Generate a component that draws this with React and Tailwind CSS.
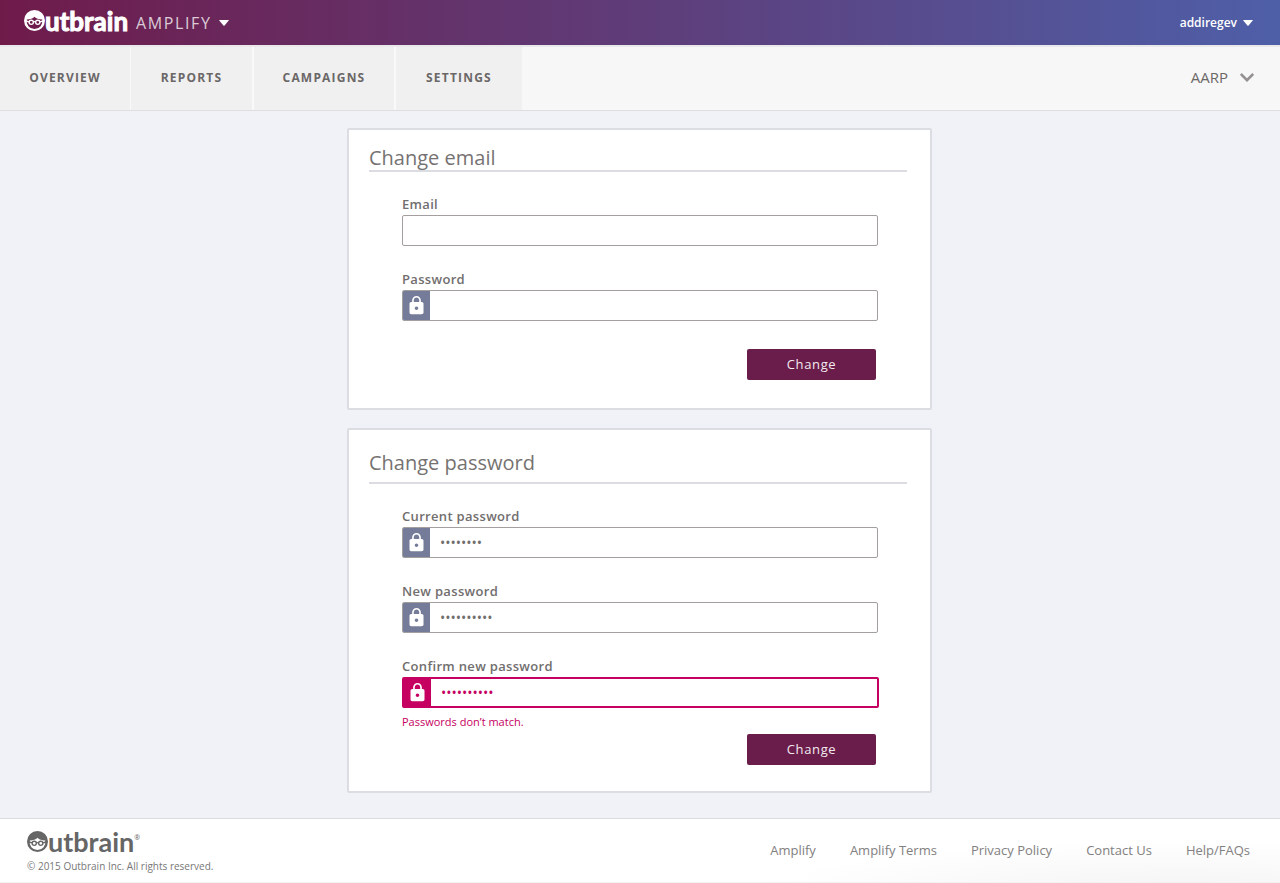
import { MdLock } from "react-icons/md";

function FaceMark({ className }) {
  return (
    <svg viewBox="0 0 40 40" className={className} aria-hidden="true" fill="currentColor">
      <path
        fillRule="evenodd"
        d="M20 0a20 20 0 1 1 0 40a20 20 0 0 1 0-40zM20 13c-3.500 3.600-8 5-14.700 5.300a15 15 0 1 0 29.400 0c-6.700-.3-11.200-1.700-14.700-5.300z"
      />
      <g fill="none" stroke="currentColor" strokeWidth="2.600">
        <circle cx="13.800" cy="23.500" r="4" />
        <circle cx="26.200" cy="23.500" r="4" />
        <path d="M17.800 23q2.200-1.800 4.400 0M9.800 22.500l-6-1.500M30.200 22.500l6-1.500" />
      </g>
    </svg>
  );
}

function Caret() {
  return (
    <svg viewBox="0 0 10 6" className="h-1.5 w-2.5" aria-hidden="true" fill="currentColor">
      <path d="M0.500 0h9q.6 0 .2.600L5.600 5.400q-.6.600-1.200 0L.3.600Q-.1 0 .5 0z" />
    </svg>
  );
}

function Field({ id, label, type = "password", value, error }) {
  return (
    <div>
      <label htmlFor={id} className="mb-0.5 block text-[13px] leading-[18px] font-semibold tracking-wide text-[#716e6e]">
        {label}
      </label>
      <div
        className={
          error
            ? "-mr-px flex h-[31px] overflow-hidden rounded-xs border-2 border-[#c60061] bg-white text-[#c60061]"
            : "flex h-[31px] overflow-hidden rounded-xs border border-[#a39f9f] bg-white text-[#716e6e]"
        }
      >
        {type === "password" && (
          <span
            className={
              error
                ? "flex w-[27px] shrink-0 items-center justify-center bg-[#c60061] text-white"
                : "flex w-[27px] shrink-0 items-center justify-center bg-[#757c99] text-white"
            }
          >
            <MdLock size={21} />
          </span>
        )}
        <input
          id={id}
          type={type}
          defaultValue={value}
          aria-invalid={error ? true : undefined}
          aria-describedby={error ? id + "-error" : undefined}
          className="min-w-0 flex-1 bg-transparent px-2.5 text-sm outline-none"
        />
      </div>
      {error && (
        <p id={id + "-error"} className="mt-1 text-[11px] leading-5 text-[#c60061]">
          {error}
        </p>
      )}
    </div>
  );
}

function ChangeButton() {
  return (
    <button
      type="submit"
      className="mr-0.5 h-[31px] w-[129px] rounded-xs bg-[#6a1d4a] text-[13px] tracking-wider text-[#f3e9ef]"
    >
      Change
    </button>
  );
}

const tabs = [
  { label: "Overview", style: "w-[131px] border-r" },
  { label: "Reports", style: "w-[123px] border-r-2" },
  { label: "Campaigns", style: "w-[142px] border-r-2" },
  { label: "Settings", style: "w-[126px]" },
];

const footerLinks = ["Amplify", "Amplify Terms", "Privacy Policy", "Contact Us", "Help/FAQs"];

export default function App() {
  return (
    <div className="flex min-h-screen flex-col bg-[#f1f2f7] font-['Open_Sans',sans-serif]">
      <header className="flex h-[45px] items-center justify-between bg-linear-to-r/srgb from-[#6f1b4a] to-[#4e5fa8] pr-[27px] pl-6 text-white">
        <div className="flex items-center">
          <a href="#home" className="flex items-center pb-1" aria-label="Outbrain">
            <FaceMark className="size-[21px]" />
            <span className="font-['Lato',sans-serif] text-[26px] leading-6 font-bold [-webkit-text-stroke:1px_currentColor]">utbrain</span>
          </a>
          <button type="button" className="ml-2 flex items-center gap-2">
            <span className="text-base tracking-widest text-[#dccbd7]">AMPLIFY</span>
            <Caret />
          </button>
        </div>
        <button type="button" className="flex items-center gap-1.5 text-xs font-semibold">
          addiregev
          <Caret />
        </button>
      </header>

      <nav className="flex h-[66px] items-stretch justify-between border-t-2 border-b border-t-[#e9e9ec] border-b-[#dedede] bg-[#f7f7f7]">
        <div className="flex">
          {tabs.map((tab) => (
            <a
              key={tab.label}
              href={"#" + tab.label.toLowerCase()}
              className={
                "flex items-center justify-center border-[#f9f9f9] bg-[#f0f0f0] pb-0.5 text-xs font-bold tracking-widest text-[#6b6767] uppercase " +
                tab.style
              }
            >
              {tab.label}
            </a>
          ))}
        </div>
        <button type="button" className="mr-[26px] flex items-center gap-3 pb-0.5 text-[15px] text-[#6b6868]">
          AARP
          <svg viewBox="0 0 14 9" className="h-[9px] w-3.5 text-[#949190]" fill="none" stroke="currentColor" strokeWidth="2.600" aria-hidden="true">
            <path d="M.8 1l6.200 6.200l6.200-6.200" />
          </svg>
        </button>
      </nav>

      <main className="mx-auto flex w-full max-w-[586px] flex-1 flex-col gap-[18px] pt-[17px] pr-px pb-[25px]">
        <section className="rounded-xs border-2 border-[#dcdde3] bg-white pt-4 pr-[23px] pb-7 pl-5">
          <h2 className="border-b-2 border-[#dcdde3] text-xl leading-6 text-[#767272]">Change email</h2>
          <form className="mt-[23px] mr-[29px] ml-[33px]">
            <div className="flex flex-col gap-6">
              <Field id="email" label="Email" type="email" />
              <Field id="email-password" label="Password" />
            </div>
            <div className="mt-7 flex justify-end">
              <ChangeButton />
            </div>
          </form>
        </section>

        <section className="rounded-xs border-2 border-[#dcdde3] bg-white pt-[21px] pr-[23px] pb-[26px] pl-5">
          <h2 className="border-b-2 border-[#dcdde3] pb-[7px] text-xl leading-6 text-[#767272]">Change password</h2>
          <form className="mt-[23px] mr-[29px] ml-[33px]">
            <div className="flex flex-col gap-6">
              <Field id="current" label="Current password" value="password" />
              <Field id="new" label="New password" value="password12" />
              <Field id="confirm" label="Confirm new password" value="password21" error="Passwords don’t match." />
            </div>
            <div className="mt-0.5 flex justify-end">
              <ChangeButton />
            </div>
          </form>
        </section>
      </main>

      <footer className="flex h-[65px] items-center justify-between border-y border-t-[#dcdde0] border-b-[#f2f2f2] bg-white bg-[radial-gradient(ellipse_420px_50px_at_92%_115%,#f4f4f4,#ffffff)] pr-[30px] pl-[27px]">
        <div className="pt-0.5">
          <a href="#home" className="flex items-center text-[#666666]" aria-label="Outbrain">
            <FaceMark className="size-[21px]" />
            <span className="font-['Lato',sans-serif] text-[27px] leading-6 font-bold">utbrain</span>
            <span className="self-start pt-0.5 text-[7px] leading-3">®</span>
          </a>
          <p className="mt-1 text-[10px] leading-4 text-[#777777]">© 2015 Outbrain Inc. All rights reserved.</p>
        </div>
        <ul className="flex gap-[34px] text-[13px] text-[#828080]">
          {footerLinks.map((text) => (
            <li key={text}>
              <a href="#footer">{text}</a>
            </li>
          ))}
        </ul>
      </footer>
    </div>
  );
}
